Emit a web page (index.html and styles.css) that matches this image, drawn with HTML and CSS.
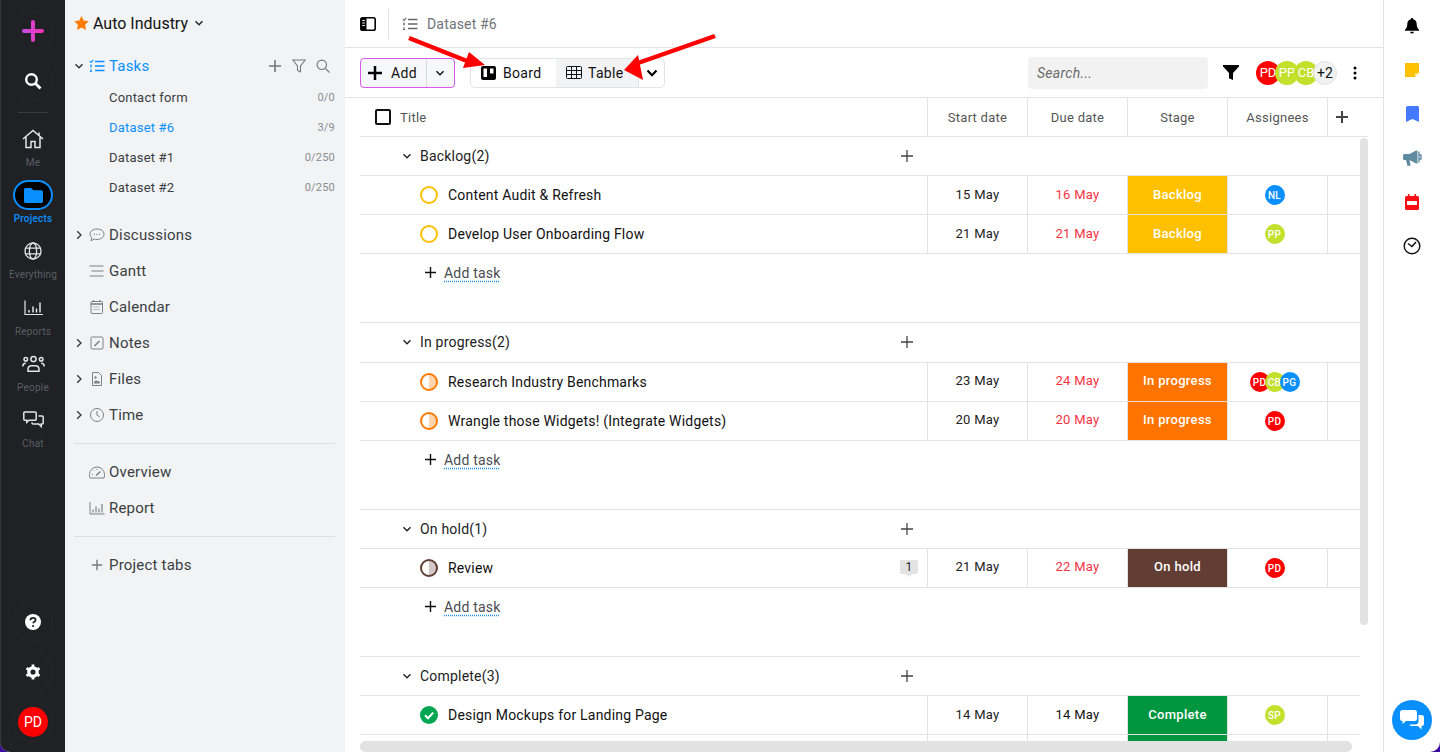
FILE: index.html
```html
<!DOCTYPE html>
<html lang="en">
<head>
<meta charset="utf-8">
<title>Dataset #6</title>
<link rel="stylesheet" href="styles.css">
</head>
<body>
<svg class="defs" width="0" height="0" aria-hidden="true">
  <symbol id="chev-d" viewBox="0 0 12 12"><path d="M2.5 4.2 6 7.8l3.5-3.6" fill="none" stroke="currentColor" stroke-width="1.4"/></symbol>
  <symbol id="chev-r" viewBox="0 0 12 12"><path d="M4.2 2.2 8 6l-3.8 3.8" fill="none" stroke="currentColor" stroke-width="1.3"/></symbol>
  <symbol id="plus" viewBox="0 0 14 14"><path d="M7 1v12M1 7h12" fill="none" stroke="currentColor" stroke-width="1.6"/></symbol>
  <symbol id="tasks" viewBox="0 0 16 14"><path d="M6 2.5h9.500M6 7h9.500M6 11.500h9.500" stroke="currentColor" stroke-width="1.300" fill="none"/><path d="m.8 2.200 1.300 1.300L4.300.9" stroke="currentColor" stroke-width="1.100" fill="none"/><path d="M1 6.200h2M1 7.800h2M1 11h2M1 12.500h2" stroke="currentColor" stroke-width="1"/></symbol>
</svg>

<div class="app">
  <nav class="rail">
    <div class="rail-top">
      <div class="rail-btn"><svg width="22" height="22" viewBox="0 0 22 22"><defs><linearGradient id="pg" gradientUnits="userSpaceOnUse" x1="0" y1="0" x2="22" y2="0"><stop offset="0" stop-color="#c44fe4"/><stop offset="1" stop-color="#f52fb0"/></linearGradient></defs><path d="M11 2v18M2 11h18" fill="none" stroke="url(#pg)" stroke-width="4" stroke-linecap="round"/></svg></div>
      <div class="rail-btn"><svg width="18" height="18" viewBox="0 0 18 18"><circle cx="7.500" cy="7.500" r="5.300" fill="none" stroke="#fff" stroke-width="2.400"/><path d="m11.500 11.500 5 5" stroke="#fff" stroke-width="2.800"/></svg></div>
      <div class="rail-sep"></div>
      <div class="rail-item r-me"><svg width="22" height="20" viewBox="0 0 22 20" fill="none" stroke="#e4e4e4" stroke-width="1.500"><path d="M1 10 11 1.500 21 10M4 8v10.500h5V12.500h4v6h5V8M17 3.500v3"/></svg><span>Me</span></div>
      <div class="rail-item r-projects"><div class="pill"><svg width="19" height="16" viewBox="0 0 19 16"><path d="M1.500 1h5.800l2 2.200h8.200a1.500 1.500 0 0 1 1.500 1.500v9.800a1.500 1.500 0 0 1-1.500 1.500h-16A1.500 1.500 0 0 1 0 14.500v-12A1.500 1.500 0 0 1 1.500 1z" fill="#0a8fff"/></svg></div><span>Projects</span></div>
      <div class="rail-item r-every"><svg width="18" height="18" viewBox="0 0 18 18" fill="none" stroke="#e4e4e4" stroke-width="1.300"><circle cx="9" cy="9" r="8"/><ellipse cx="9" cy="9" rx="3.600" ry="8"/><path d="M1.500 6.200h15M1.500 11.800h15"/></svg><span>Everything</span></div>
      <div class="rail-item"><svg width="19" height="15" viewBox="0 0 19 15" fill="none" stroke="#e4e4e4"><path d="M1 0v14h18" stroke-width="1.200"/><path d="M5 9.500v2.500M9 6v6M12.500 8v4M16 2v10" stroke-width="1.500"/></svg><span>Reports</span></div>
      <div class="rail-item"><svg width="23" height="17" viewBox="0 0 23 17" fill="none" stroke="#e4e4e4" stroke-width="1.500"><circle cx="11.500" cy="3.500" r="2.600"/><circle cx="3.800" cy="3.800" r="1.800"/><circle cx="19.200" cy="3.800" r="1.800"/><path d="M6 15.800v-2.300a3.500 3.500 0 0 1 3.500-3.300h4a3.500 3.500 0 0 1 3.500 3.300v2.300zM.8 11c0-2 1-3.200 3-3.200M22.200 11c0-2-1-3.200-3-3.200"/></svg><span>People</span></div>
      <div class="rail-item"><svg width="21" height="18" viewBox="0 0 21 18" fill="none" stroke="#e4e4e4" stroke-width="1.500"><path d="M1.800 1h10.400a1 1 0 0 1 1 1v6.200a1 1 0 0 1-1 1H6l-2.200 2v-2h-2a1 1 0 0 1-1-1V2a1 1 0 0 1 1-1z"/><path d="M15.500 5h3.700a1 1 0 0 1 1 1v6a1 1 0 0 1-1 1h-1v2.500L15.800 13H10a1 1 0 0 1-1-1v-.8"/></svg><span>Chat</span></div>
    </div>
    <div class="rail-bottom">
      <div class="rail-btn"><svg width="16" height="16" viewBox="0 0 16 16"><circle cx="8" cy="8" r="8" fill="#fff"/><path d="M5.400 6.200c0-1.500 1.100-2.400 2.600-2.400s2.600.9 2.600 2.200c0 1.600-2.400 1.800-2.400 3.200" fill="none" stroke="#1f2125" stroke-width="1.800"/><circle cx="8.100" cy="12" r="1.100" fill="#1f2125"/></svg></div>
      <div class="rail-btn"><svg width="16" height="16" viewBox="0 0 16 16"><circle cx="8" cy="8" r="4.200" fill="none" stroke="#fff" stroke-width="3.300"/><path d="M8 .5v3M8 12.500v3M1.500 4.200l2.600 1.500M11.900 10.300l2.600 1.500M1.500 11.800l2.600-1.500M11.900 5.700l2.600-1.500" stroke="#fff" stroke-width="2.800"/></svg></div>
      <div class="rail-btn"><div class="me-avatar">PD</div></div>
    </div>
  </nav>

  <aside class="side">
    <div class="proj"><svg width="15" height="14" viewBox="0 0 15 14"><path d="m7.500 0 2.200 4.600 5 .7-3.600 3.500.9 5.100-4.500-2.400L3 13.900l.9-5.100L.3 5.300l5-.7z" fill="#ff7a00"/></svg><span>Auto Industry</span><svg class="pchev" width="12" height="12"><use href="#chev-d"/></svg></div>
    <div class="tasks-row">
      <svg class="caret" width="12" height="12"><use href="#chev-d"/></svg>
      <svg class="ti" width="16" height="14"><use href="#tasks"/></svg>
      <span class="tasks-label">Tasks</span>
      <div class="tasks-tools">
        <svg width="14" height="14"><use href="#plus"/></svg>
        <svg width="14" height="14" viewBox="0 0 14 14" fill="none" stroke="currentColor" stroke-width="1.100"><path d="M.8 1h12.400L8.500 7v5.800L5.500 11.500V7z"/></svg>
        <svg width="14" height="14" viewBox="0 0 14 14" fill="none" stroke="currentColor" stroke-width="1.100"><circle cx="5.800" cy="5.800" r="4.700"/><path d="m9.300 9.300 4.200 4.200"/></svg>
      </div>
    </div>
    <ul class="subs">
      <li><span>Contact form</span><em>0/0</em></li>
      <li class="cur"><span>Dataset #6</span><em>3/9</em></li>
      <li><span>Dataset #1</span><em>0/250</em></li>
      <li><span>Dataset #2</span><em>0/250</em></li>
    </ul>
    <ul class="menu">
      <li><svg class="caret" width="12" height="12"><use href="#chev-r"/></svg><svg class="mi" width="16" height="14" viewBox="0 0 16 14" fill="none" stroke="#7d8186" stroke-width="1"><path d="M8 1C4 1 1 3.300 1 6.200c0 1.400.7 2.500 1.700 3.400L2 12.800l3.200-1.700c.9.300 1.800.4 2.800.4 4 0 7-2.300 7-5.300S12 1 8 1z"/><path d="M4.800 6.300h1M7.500 6.300h1M10.200 6.300h1" stroke-width="1.200"/></svg><span>Discussions</span></li>
      <li><span class="nocaret"></span><svg class="mi" width="16" height="12" viewBox="0 0 16 12" stroke="#7d8186" stroke-width="1.200"><path d="M.5 1h14M2.500 6h12M.5 11h14"/></svg><span>Gantt</span></li>
      <li><span class="nocaret"></span><svg class="mi" width="16" height="14" viewBox="0 0 16 14" fill="none" stroke="#7d8186"><rect x="2" y="1.500" width="11.500" height="12" rx="1"/><path d="M2 4h11.500" stroke-width="1.600"/><path d="M4.500 0v2M11 0v2" stroke-width="1.200"/><path d="M4.500 7h6.500M4.500 9.500h6.500" stroke-dasharray="1 1"/></svg><span>Calendar</span></li>
      <li><svg class="caret" width="12" height="12"><use href="#chev-r"/></svg><svg class="mi" width="16" height="14" viewBox="0 0 16 14" fill="none" stroke="#7d8186"><rect x="2" y="1" width="12" height="12" rx="1.200"/><path d="m5.500 10 5-5" stroke-width="1.600"/></svg><span>Notes</span></li>
      <li><svg class="caret" width="12" height="12"><use href="#chev-r"/></svg><svg class="mi" width="16" height="14" viewBox="0 0 16 14" fill="none" stroke="#7d8186"><path d="M3.500.5h6l3 3v10h-9z"/><path d="m5 11 2-2.500 1.500 1.500 1-1 1 2z" fill="#7d8186"/><circle cx="6.500" cy="5.500" r=".8" fill="#7d8186"/></svg><span>Files</span></li>
      <li><svg class="caret" width="12" height="12"><use href="#chev-r"/></svg><svg class="mi" width="16" height="14" viewBox="0 0 16 14" fill="none" stroke="#7d8186"><circle cx="8" cy="7" r="6.500"/><path d="M8 3v4.300l2.700 1.500"/></svg><span>Time</span></li>
    </ul>
    <div class="side-line"></div>
    <ul class="menu">
      <li><span class="nocaret"></span><svg class="mi" width="16" height="13" viewBox="0 0 16 13" fill="none" stroke="#7d8186"><path d="M1 12c-.5-1-.5-2-.5-3.500a7.500 7.500 0 0 1 15 0c0 1.500 0 2.500-.5 3.500z"/><path d="m7 9.500 4.500-4" stroke-width="1.600"/><path d="M3 8.500h1M5 4.500l.5.500M8 3v1" /></svg><span>Overview</span></li>
      <li><span class="nocaret"></span><svg class="mi" width="16" height="13" viewBox="0 0 16 13" fill="none" stroke="#7d8186"><path d="M1 0v12h14.500"/><path d="M4 7.500v3M7 4.500v6M10 6.500v4M13 2v8.500" stroke-width="1.200"/></svg><span>Report</span></li>
    </ul>
    <div class="side-line line2"></div>
    <ul class="menu">
      <li><span class="nocaret"></span><svg class="mi tabs" width="16" height="12"><use href="#plus"/></svg><span>Project tabs</span></li>
    </ul>
  </aside>

  <main class="main">
    <header class="crumbs">
      <div class="crumb-toggle"><svg width="16" height="14" viewBox="0 0 16 14"><rect x=".8" y=".8" width="14.400" height="12.400" rx="1.800" fill="#fff" stroke="#000" stroke-width="1.600"/><path d="M1 1h5.500v12H1z"/><path d="M2.300 3.500h2.500M2.300 6h2.500M2.300 8.500h2.500" stroke="#fff" stroke-width="1"/></svg></div>
      <svg class="crumb-i" width="16" height="14"><use href="#tasks"/></svg>
      <span class="crumb-t">Dataset #6</span>
    </header>

    <div class="toolbar">
      <div class="add"><div class="add-main"><svg width="14" height="14" viewBox="0 0 14 14"><path d="M7 0v14M0 7h14" stroke="#000" stroke-width="2.500"/></svg><span>Add</span></div><div class="add-more"><svg width="12" height="12"><use href="#chev-d"/></svg></div></div>
      <div class="views">
        <div class="view"><svg width="15" height="14" viewBox="0 0 15 14"><path d="M2 0h11a2 2 0 0 1 2 2v10a2 2 0 0 1-2 2H2a2 2 0 0 1-2-2V2a2 2 0 0 1 2-2zm.5 2.500v8.500H6V2.500zm6.500 0v5h3.500v-5z" fill="#000" fill-rule="evenodd"/></svg><span>Board</span></div>
        <div class="view on"><svg width="16" height="13" viewBox="0 0 16 13" fill="none" stroke="#111" stroke-width="1"><rect x=".5" y=".5" width="15" height="12" rx="1"/><path d="M.5 4.500h15M.5 8.500h15M5.500.5v12M10.500.5v12"/></svg><span>Table</span></div>
        <div class="view-more"><svg width="14" height="14" viewBox="0 0 14 14"><path d="M2.500 4.500 7 9.200l4.500-4.700" fill="none" stroke="#000" stroke-width="2.200"/></svg></div>
      </div>
      <div class="tool-right">
        <div class="search">Search...</div>
        <svg class="funnel" width="16" height="15" viewBox="0 0 16 15"><path d="M0 0h16v1.500L10 8v7l-4-1.800V8L0 1.500z"/></svg>
        <div class="stack">
          <i class="av big red">PD</i><i class="av big lime">PP</i><i class="av big lime">CB</i><i class="av big more">+2</i>
        </div>
        <svg class="kebab" width="4" height="14" viewBox="0 0 4 14"><circle cx="2" cy="2" r="1.500"/><circle cx="2" cy="7" r="1.500"/><circle cx="2" cy="12" r="1.500"/></svg>
      </div>
    </div>

    <div class="grid-wrap">
      <div class="thead">
        <div class="c-title th-title"><span class="box"></span><span>Title</span></div>
        <div class="c">Start date</div><div class="c">Due date</div><div class="c">Stage</div><div class="c">Assignees</div>
        <div class="c-end"><svg width="12" height="12" viewBox="0 0 14 14"><path d="M7 0v14M0 7h14" stroke="#444" stroke-width="2.400"/></svg></div>
      </div>

      <section class="group">
        <div class="ghead"><svg width="12" height="12"><use href="#chev-d"/></svg><span class="gname">Backlog(2)</span><svg class="gplus" width="12" height="12" viewBox="0 0 14 14"><path d="M7 0v14M0 7h14" stroke="#444" stroke-width="1.500"/></svg></div>
        <div class="row"><div class="c-title"><span class="st st-back"></span><span class="tname">Content Audit &amp; Refresh</span></div><div class="c">15 May</div><div class="c late">16 May</div><div class="c stage back">Backlog</div><div class="c who"><i class="av sm blue">NL</i></div><div class="c-end"></div></div>
        <div class="row"><div class="c-title"><span class="st st-back"></span><span class="tname">Develop User Onboarding Flow</span></div><div class="c">21 May</div><div class="c late">21 May</div><div class="c stage back">Backlog</div><div class="c who"><i class="av sm lime">PP</i></div><div class="c-end"></div></div>
        <div class="addrow"><svg width="11" height="11" viewBox="0 0 14 14"><path d="M7 0v14M0 7h14" stroke="#111" stroke-width="1.800"/></svg><span>Add task</span></div>
      </section>

      <section class="group tall shift">
        <div class="ghead"><svg width="12" height="12"><use href="#chev-d"/></svg><span class="gname">In progress(2)</span><svg class="gplus" width="12" height="12" viewBox="0 0 14 14"><path d="M7 0v14M0 7h14" stroke="#444" stroke-width="1.500"/></svg></div>
        <div class="row"><div class="c-title"><span class="st st-prog"></span><span class="tname">Research Industry Benchmarks</span></div><div class="c">23 May</div><div class="c late">24 May</div><div class="c stage prog">In progress</div><div class="c who"><div class="trio"><i class="av sm red">PD</i><i class="av sm lime">CB</i><i class="av sm blue">PG</i></div></div><div class="c-end"></div></div>
        <div class="row"><div class="c-title"><span class="st st-prog"></span><span class="tname">Wrangle those Widgets! (Integrate Widgets)</span></div><div class="c">20 May</div><div class="c late">20 May</div><div class="c stage prog">In progress</div><div class="c who"><i class="av sm red">PD</i></div><div class="c-end"></div></div>
        <div class="addrow"><svg width="11" height="11" viewBox="0 0 14 14"><path d="M7 0v14M0 7h14" stroke="#111" stroke-width="1.800"/></svg><span>Add task</span></div>
      </section>

      <section class="group shift">
        <div class="ghead"><svg width="12" height="12"><use href="#chev-d"/></svg><span class="gname">On hold(1)</span><svg class="gplus" width="12" height="12" viewBox="0 0 14 14"><path d="M7 0v14M0 7h14" stroke="#444" stroke-width="1.500"/></svg></div>
        <div class="row"><div class="c-title"><span class="st st-hold"></span><span class="tname">Review</span><span class="cmt">1</span></div><div class="c">21 May</div><div class="c late">22 May</div><div class="c stage hold">On hold</div><div class="c who"><i class="av sm red">PD</i></div><div class="c-end"></div></div>
        <div class="addrow"><svg width="11" height="11" viewBox="0 0 14 14"><path d="M7 0v14M0 7h14" stroke="#111" stroke-width="1.800"/></svg><span>Add task</span></div>
      </section>

      <section class="group">
        <div class="ghead"><svg width="12" height="12"><use href="#chev-d"/></svg><span class="gname">Complete(3)</span><svg class="gplus" width="12" height="12" viewBox="0 0 14 14"><path d="M7 0v14M0 7h14" stroke="#444" stroke-width="1.500"/></svg></div>
        <div class="row"><div class="c-title"><svg class="st-svg" width="18" height="18" viewBox="0 0 18 18"><circle cx="9" cy="9" r="9" fill="#00a651"/><path d="m5 9.200 3 3 5.200-5.600" fill="none" stroke="#fff" stroke-width="2"/></svg><span class="tname">Design Mockups for Landing Page</span></div><div class="c">14 May</div><div class="c">14 May</div><div class="c stage done">Complete</div><div class="c who"><i class="av sm lime">SP</i></div><div class="c-end"></div></div>
        <div class="row"><div class="c-title"></div><div class="c"></div><div class="c"></div><div class="c stage done"></div><div class="c who"></div><div class="c-end"></div></div>
      </section>

      <div class="vbar"></div>
      <div class="hbar"></div>
    </div>
  </main>

  <aside class="right">
    <svg width="16" height="17" viewBox="0 0 16 17"><path d="M8 0c.8 0 1.300.5 1.300 1.200 2.500.6 3.700 2.600 3.700 5.300 0 3 .7 4.300 2.500 6v1.100H.5v-1.100C2.300 10.800 3 9.500 3 6.500c0-2.700 1.200-4.700 3.700-5.300C6.700.5 7.200 0 8 0zM6 14.600h4a2 2 0 0 1-4 0z"/></svg>
    <svg width="14" height="14" viewBox="0 0 14 14"><path d="M0 0h14v9.500L9.500 14H0z" fill="#ffc000"/><path d="M10 10h4l-4 4z" fill="#ffe28a"/></svg>
    <svg width="13" height="16" viewBox="0 0 13 16"><path d="M0 1.500A1.500 1.500 0 0 1 1.500 0h10A1.500 1.500 0 0 1 13 1.500V16l-6.500-3L0 16z" fill="#4579ff"/></svg>
    <svg width="18" height="16" viewBox="0 0 18 16"><path d="M1.500 4h5L13 .5h1.500v13H13L7 10.200 6.500 10l1.200 5.500-3.200.5L3 10H1.500A1.500 1.500 0 0 1 0 8.500v-3A1.500 1.500 0 0 1 1.500 4z" fill="#5f8aa0"/><path d="M16 1.500v11M16 5h2v4h-2" stroke="#5f8aa0" stroke-width="1.300" fill="none"/></svg>
    <svg width="14" height="16" viewBox="0 0 14 16"><path d="M3 0h1.500v2h5V0H11v2h1.500A1.500 1.500 0 0 1 14 3.500v11a1.500 1.500 0 0 1-1.500 1.500h-11A1.500 1.500 0 0 1 0 14.500v-11A1.500 1.500 0 0 1 1.500 2H3zM2 7v4h10V7z" fill="#fa0e14" fill-rule="evenodd"/></svg>
    <svg class="clock" width="18" height="18" viewBox="0 0 18 18" fill="none" stroke="#111"><circle cx="9" cy="9" r="7.800" stroke-width="1.400"/><path d="m5 6.500 4 3 4-4.500" stroke-width="1.500"/></svg>
  </aside>

  <svg class="arrows" width="1440" height="120" viewBox="0 0 1440 120">
    <path d="M409 38 467 61" stroke="#f00" stroke-width="4.500"/>
    <path d="M485 65 469 52 463 68z" fill="#f00"/>
    <path d="M715 36 638 63" stroke="#f00" stroke-width="4.500"/>
    <path d="M624 70 638 55 643 80z" fill="#f00"/>
  </svg>

  <div class="chat-fab"><svg width="24" height="21" viewBox="0 0 24 21"><path d="M2.500 0h12A2.500 2.500 0 0 1 17 2.500v6a2.500 2.500 0 0 1-2.500 2.500H6l-3.500 3V11A2.500 2.500 0 0 1 0 8.500v-6A2.500 2.500 0 0 1 2.500 0z" fill="#fff"/><path d="M18.500 5h3A2.500 2.500 0 0 1 24 7.500v6a2.500 2.500 0 0 1-2.500 2.500v3.500L18 16h-6.500c-1 0-1.800-.7-2-1.500H15a3.500 3.500 0 0 0 3.500-3.500z" fill="#fff"/></svg></div>
</div>
</body>
</html>
```

FILE: styles.css
```css
* { box-sizing: border-box; }
html, body { margin: 0; height: 100%; overflow: hidden; background: #3a0ca3; }
body { font-family: Roboto, "Noto Sans", sans-serif; color: #111; }
ul { list-style: none; margin: 0; padding: 0; }
em { font-style: normal; }
i { font-style: normal; }
.defs { position: absolute; }

.app { position: relative; display: flex; width: 1440px; height: 752px; border-radius: 0 0 10px 10px; overflow: hidden; background: #fff; }

/* dark rail */
.rail { width: 65px; flex: none; background: #1f2125; border-left: 1px solid #34373c; display: flex; flex-direction: column; justify-content: space-between; padding-top: 6px; padding-bottom: 10px; }
.rail-top, .rail-bottom { display: flex; flex-direction: column; align-items: center; }
.rail-btn { width: 40px; height: 40px; border-radius: 50%; display: flex; align-items: center; justify-content: center; border: 1px solid #25272b; margin-top: 5px; }
.rail-top .rail-btn { margin-top: 5px; margin-bottom: 5px; }
.rail-bottom .rail-btn { margin-top: 10px; }
.rail-bottom .rail-btn:first-child { margin-top: 0; }
.rail-sep { width: 30px; height: 1px; background: #3a3d42; margin-top: 6px; margin-bottom: 16px; }
.rail-item { height: 56px; display: flex; flex-direction: column; align-items: center; color: #5b5e63; font-size: 10px; letter-spacing: .2px; }
.rail-item > svg { height: 20px; margin-top: 0; margin-bottom: 4px; overflow: visible; }
.rail-item > span { line-height: 20px; }
.r-me { height: 51px; }
.r-projects { height: 61px; }
.r-every { height: 57px; }
.r-projects span { color: #0a8fff; font-weight: 500; line-height: 14px; margin-top: 2px; }
.pill { width: 40px; height: 30px; border-radius: 15px; border: 2px solid #0a8fff; background: #000; display: flex; align-items: center; justify-content: center; }
.me-avatar { width: 30px; height: 30px; border-radius: 50%; background: #f00; color: #fff; font-size: 14px; display: flex; align-items: center; justify-content: center; }

/* sidebar */
.side { width: 280px; flex: none; background: #f1f3f5; padding-left: 9px; padding-right: 10px; color: #3b3e42; }
.proj { height: 46px; display: flex; align-items: center; font-size: 16px; color: #111; }
.proj span { margin-left: 4px; }
.pchev { margin-left: 5px; color: #222; }
.tasks-row { height: 38px; margin-top: 1px; display: flex; align-items: center; color: #0a8fff; }
.caret { width: 12px; flex: none; color: #333; margin-left: -1px; margin-right: 1px; }
.ti { margin-left: 3px; }
.tasks-label { font-size: 15px; margin-left: 4px; letter-spacing: .2px; }
.tasks-tools { margin-left: auto; display: flex; gap: 10px; align-items: center; color: #777; padding-right: 5px; }
.subs { padding-left: 35px; margin-top: -3px; }
.subs li { height: 30px; display: flex; align-items: center; justify-content: space-between; font-size: 13px; letter-spacing: .2px; }
.subs em { font-size: 11px; color: #8a8d91; }
.subs .cur span { color: #0a8fff; }
.menu { margin-top: 0; }
.subs + .menu { margin-top: 15px; }
.menu li { height: 36px; display: flex; align-items: center; font-size: 15px; letter-spacing: .2px; color: #3b3e42; }
.nocaret { width: 12px; flex: none; }
.mi { margin-left: 3px; margin-right: 4px; flex: none; overflow: visible; }
.tabs { color: #777; }
.side-line { height: 1px; background: #dcdee0; margin: 10px 0 10px 0; }
.line2 { margin: 10px 0; }

/* main */
.main { flex: 1; min-width: 0; display: flex; flex-direction: column; }
.crumbs { height: 48px; flex: none; border-bottom: 1px solid #e3e3e3; display: flex; align-items: center; padding-left: 15px; color: #666; }
.crumb-toggle { width: 29px; height: 30px; border-right: 1px solid #e3e3e3; display: flex; align-items: center; }
.crumb-i { margin-left: 13px; color: #666; }
.crumb-t { margin-left: 9px; font-size: 14px; letter-spacing: .17px; color: #70747a; }

.toolbar { height: 50px; flex: none; border-bottom: 1px solid #e3e3e3; display: flex; align-items: center; padding-left: 15px; padding-right: 26px; }
.add { width: 95px; height: 30px; border: 1px solid #d658e8; border-radius: 4px; display: flex; background: #f7f8f9; }
.add-main { flex: 1; display: flex; align-items: center; gap: 9px; padding-left: 7px; font-size: 14px; letter-spacing: .3px; }
.add-more { width: 28px; border-left: 1px solid #dcdcdc; display: flex; align-items: center; justify-content: center; padding-right: 2px; }
.views { margin-left: 15px; height: 30px; width: 195px; border: 1px solid #e3e3e3; border-radius: 5px; display: flex; background: #fff; overflow: hidden; }
.view { display: flex; align-items: center; gap: 7px; padding-left: 10px; font-size: 14px; letter-spacing: .3px; width: 85px; }
.view.on { background: #f1f3f5; gap: 6px; width: 83px; border-right: 1px solid #e3e3e3; padding-left: 10px; }
.view-more { flex: 1; display: flex; align-items: center; justify-content: center; }
.tool-right { margin-left: auto; display: flex; align-items: center; }
.search { width: 180px; height: 32px; border-radius: 4px; background: #f2f2f2; padding-left: 9px; line-height: 32px; font-size: 14px; font-style: italic; letter-spacing: .3px; color: #6b6b6b; }
.funnel { margin-left: 15px; }
.stack { display: flex; margin-left: 17px; }
.kebab { margin-left: 16px; }

.av { display: inline-flex; align-items: center; justify-content: center; border-radius: 50%; color: #fff; font-weight: 500; overflow: hidden; flex: none; }
.big { width: 24px; height: 24px; font-size: 13px; font-weight: 400; margin-right: -5px; }
.more { background: #f1f2f3; color: #111; border: 1px solid #e3e3e3; margin-right: 0; font-size: 14px; }
.sm { width: 20px; height: 20px; font-size: 10px; }
.red { background: #f00; }
.lime { background: #c2e02c; }
.blue { background: #0a8fff; }
.trio { display: flex; justify-content: center; }
.trio .av { margin: 0 -2.500px; }

.grid-wrap { position: relative; flex: 1; min-height: 0; overflow: hidden; padding-left: 15px; }
.thead { width: 1008px; height: 39px; display: flex; border-bottom: 1px solid #e3e3e3; font-size: 13px; letter-spacing: .25px; color: #555; }
.c-title { width: 567px; flex: none; display: flex; align-items: center; position: relative; }
.c { width: 100px; flex: none; display: flex; align-items: center; justify-content: center; border-left: 1px solid #e3e3e3; }
.c-end { flex: 1; border-left: 1px solid #e3e3e3; display: flex; align-items: center; padding-left: 8px; }
.thead .c-title { padding-left: 15px; }
.box { width: 16px; height: 16px; border: 2px solid #111; border-radius: 2px; margin-right: 9px; }
.group { width: 1000px; }
.ghead { height: 39px; border-bottom: 1px solid #e3e3e3; display: flex; align-items: center; padding-left: 41px; font-size: 14px; letter-spacing: .2px; position: relative; color: #222; }
.tall .ghead { height: 40px; padding-bottom: 1px; }
.gname { margin-left: 7px; }
.gplus { margin-left: auto; margin-right: 447px; }
.row { height: 39px; display: flex; border-bottom: 1px solid #e3e3e3; font-size: 13px; letter-spacing: .3px; }
.row > .c:nth-child(2) { color: #222; }
.row .c-title { padding-left: 60px; font-size: 14px; color: #111; }
.row .c { padding-bottom: 2px; }
.row .who { padding-bottom: 0; padding-right: 6px; }
.shift .row .c:not(.who) { padding-bottom: 3px; }
.st { width: 18px; height: 18px; border-radius: 50%; border: 2px solid; flex: none; margin-right: 10px; }
.st-svg { margin-right: 10px; flex: none; }
.st-back { border-color: #ffc000; }
.st-prog { border-color: #ff7a00; background: linear-gradient(90deg, #fff 50%, #ffd5ae 50%); }
.st-hold { border-color: #613d33; background: linear-gradient(90deg, #fff 50%, #d3c8c5 50%); }
.tname { letter-spacing: .2px; }
.late { color: #f5333f; }
.row .stage { color: #fff; font-weight: 500; letter-spacing: .3px; }
.back { background: #ffc000; }
.prog { background: #ff7400; }
.hold { background: #613d33; }
.done { background: #00963f; }
.cmt { position: absolute; right: 9px; top: 11px; width: 18px; height: 14px; background: #e3e3e3; border-radius: 2px; font-size: 12px; line-height: 15px; text-align: center; color: #222; }
.cmt::after { content: ""; position: absolute; left: 6px; top: 14px; border: 3px solid transparent; border-top-color: #e3e3e3; }
.addrow { height: 69px; border-bottom: 1px solid #e3e3e3; display: flex; align-items: flex-start; padding-left: 65px; padding-top: 11px; font-size: 14px; letter-spacing: .2px; color: #4a4d50; }
.addrow svg { margin-top: 2px; }
.addrow span { margin-left: 8px; text-decoration: underline dotted #1c8fe8; text-underline-offset: 3px; }
.vbar { position: absolute; left: 1015px; top: 40px; width: 8px; height: 487px; background: #e2e2e2; border-radius: 4px; }
.hbar { position: absolute; left: 15px; top: 643px; width: 992px; height: 11px; background: #e2e2e2; border-radius: 6px; }

/* right rail */
.right { width: 57px; flex: none; border-left: 1px solid #e3e3e3; display: flex; flex-direction: column; align-items: center; gap: 28px; padding-top: 18px; }
.right svg { height: 16px; overflow: visible; }
.right .clock { height: 18px; margin: -1px 0; }

.arrows { position: absolute; left: 0; top: 0; pointer-events: none; }
.chat-fab { position: absolute; left: 1392px; top: 700px; width: 40px; height: 40px; border-radius: 50%; background: #0a8fff; display: flex; align-items: center; justify-content: center; }
```
